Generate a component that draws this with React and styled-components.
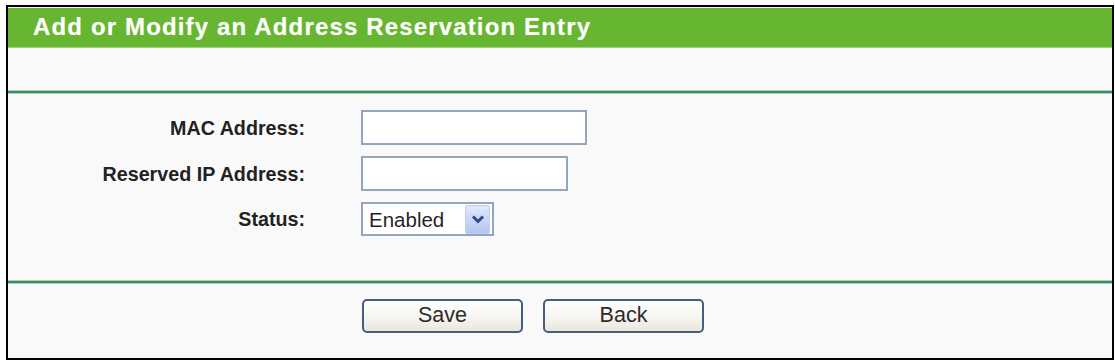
import React from 'react';
import styled, { createGlobalStyle } from 'styled-components';

const GlobalStyle = createGlobalStyle`
  html, body {
    margin: 0;
    padding: 0;
    background: #ffffff;
  }
  body {
    font-family: "Liberation Sans", Arial, sans-serif;
  }
`;

const Frame = styled.div`
  box-sizing: border-box;
  width: 1108px;
  height: 355px;
  margin: 5px 0 0 6px;
  border: 2px solid #000;
  background: #f9f9f9;
  padding-top: 1px;
  display: flex;
  flex-direction: column;
`;

const Header = styled.div`
  box-sizing: border-box;
  height: 40px;
  background: #67b632;
  border-bottom: 1px solid #9fd07c;
  padding: 0 0 2px 25px;
  display: flex;
  align-items: center;
  color: #ffffff;
  font-size: 24px;
  font-weight: bold;
  letter-spacing: 1.15px;
  text-shadow: 0 0 1px rgba(255, 255, 255, 0.4);
`;

const Band = styled.div`
  height: ${({ h }) => h}px;
`;

const Divider = styled.div`
  height: 2px;
  background: #3f8c62;
  box-shadow: 0 -1px 0 #a9d3b9, 0 1px 0 #a9d3b9;
`;

const FormGrid = styled.div`
  display: grid;
  grid-template-columns: 297px 1fr;
  column-gap: 56px;
  row-gap: 11px;
  align-items: center;
  padding: 17px 0 45px;
`;

const Label = styled.div`
  text-align: right;
  font-size: 19.7px;
  font-weight: bold;
  color: #222;
  padding-top: 1px;
`;

const TextInput = styled.input`
  box-sizing: border-box;
  width: ${({ w }) => w}px;
  height: 35px;
  border: 2px solid #93a6bb;
  background: #ffffff;
  outline: none;
  padding: 0 6px;
  font-family: "Liberation Sans", Arial, sans-serif;
  font-size: 20px;
`;

const SelectBox = styled.div`
  box-sizing: border-box;
  width: 133px;
  height: 34px;
  border: 2px solid #93a6bb;
  background: #ffffff;
  display: flex;
  align-items: center;
  justify-content: space-between;
  padding: 0 2px 0 6px;
`;

const SelectText = styled.span`
  font-size: 20.5px;
  color: #2a1f2a;
  padding-top: 2px;
`;

const ArrowButton = styled.span`
  box-sizing: border-box;
  width: 25px;
  height: 29px;
  border-radius: 2px;
  background: linear-gradient(180deg, #dfe8fc 0%, #c6d5f7 55%, #b3c6f1 100%);
  border: 1px solid #bfcdef;
  display: flex;
  align-items: center;
  justify-content: center;
`;

const ButtonRow = styled.div`
  display: flex;
  gap: 20px;
  padding: 16px 0 0 354px;
`;

const Button = styled.button`
  box-sizing: border-box;
  width: 161px;
  height: 34px;
  border: 2px solid #455e7e;
  border-radius: 5px;
  background: linear-gradient(180deg, #ffffff 0%, #f6f5f0 55%, #e9e6da 100%);
  font-family: "Liberation Sans", Arial, sans-serif;
  font-size: 21.5px;
  color: #2b2b2b;
  padding: 0 0 1px;
  cursor: pointer;
`;

const Chevron = () => (
  <svg width="14" height="10" viewBox="0 0 14 10">
    <path d="M2 2.5 L7 7.5 L12 2.5" fill="none" stroke="#34477f" strokeWidth="3" />
  </svg>
);

const App = () => {
  return (
    <>
      <GlobalStyle />
      <Frame>
        <Header>Add or Modify an Address Reservation Entry</Header>
        <Band h={43} />
        <Divider />
        <FormGrid>
          <Label>MAC Address:</Label>
          <TextInput w={226} />
          <Label>Reserved IP Address:</Label>
          <TextInput w={207} />
          <Label>Status:</Label>
          <SelectBox>
            <SelectText>Enabled</SelectText>
            <ArrowButton>
              <Chevron />
            </ArrowButton>
          </SelectBox>
        </FormGrid>
        <Divider />
        <ButtonRow>
          <Button>Save</Button>
          <Button>Back</Button>
        </ButtonRow>
      </Frame>
    </>
  );
};

export default App;
